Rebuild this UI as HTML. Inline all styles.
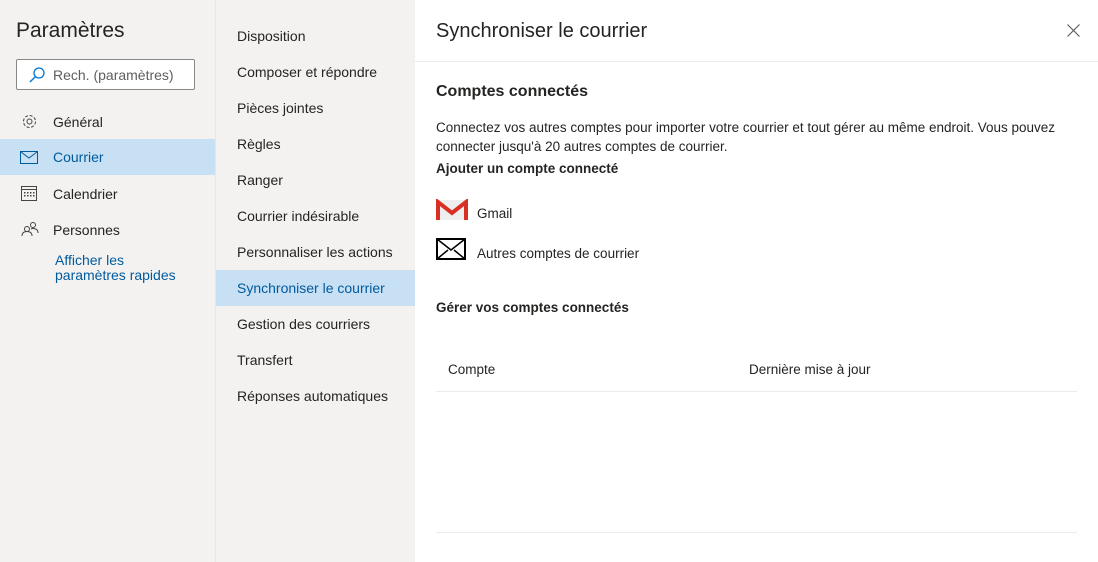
<!DOCTYPE html>
<html><head><meta charset="utf-8"><style>
*{margin:0;padding:0;box-sizing:border-box}
body{width:1098px;height:562px;overflow:hidden;font-family:"Liberation Sans",sans-serif;color:#252423;background:#fff;position:relative;font-size:14px}
.c1{position:absolute;left:0;top:0;width:215px;height:562px;background:#f3f2f1}
.c2{position:absolute;left:215px;top:0;width:200px;height:562px;background:#f3f2f1;border-left:1px solid #e8e6e4}
.c3{position:absolute;left:415px;top:0;width:683px;height:562px;background:#fff}
.t{position:absolute;white-space:nowrap}
h1{position:absolute;left:16px;top:19px;font-size:21px;font-weight:normal;color:#252423}
.search{position:absolute;left:16px;top:59px;width:179px;height:31px;border:1px solid #8a8886;background:#fff;border-radius:2px}
.nav{position:absolute;left:0;width:215px;height:36px;line-height:36px;padding-left:53px}
.sel{background:#c7e0f4;color:#005a9e;font-weight:normal}
.m{position:absolute;left:0;width:199px;height:36px;line-height:36px;padding-left:21px;font-size:14px}
</style></head><body>
<div class="c1">
<h1>Paramètres</h1>
<div class="search"><svg style="position:absolute;left:11px;top:6px" width="18" height="18" viewBox="0 0 18 18"><circle cx="11" cy="7" r="5" fill="none" stroke="#0078d4" stroke-width="1.3"/><line x1="7.4" y1="10.6" x2="2" y2="16" stroke="#0078d4" stroke-width="1.4"/></svg><span class="t" style="left:36px;top:7px;color:#605e5c">Rech. (paramètres)</span></div>
<div class="nav" style="top:104px">Général</div>
<svg style="position:absolute;left:21px;top:113px" width="17" height="17" viewBox="0 0 17 17"><circle cx="8.5" cy="8.5" r="2.5" fill="none" stroke="#444" stroke-width="1"/><circle cx="8.5" cy="8.5" r="6" fill="none" stroke="#444" stroke-width="1" stroke-dasharray="3 1.7"/></svg>
<div class="nav sel" style="top:139px">Courrier</div>
<svg style="position:absolute;left:20px;top:151px" width="18" height="13" viewBox="0 0 18 13"><rect x="0.5" y="0.5" width="17" height="12" fill="none" stroke="#005a9e"/><path d="M1 1l8 6 8-6" fill="none" stroke="#005a9e"/></svg>
<div class="nav" style="top:176px">Calendrier</div>
<svg style="position:absolute;left:21px;top:185px" width="16" height="16" viewBox="0 0 16 16"><rect x="0.5" y="1.5" width="15" height="14" fill="none" stroke="#444"/><line x1="0.5" y1="4.5" x2="15.5" y2="4.5" stroke="#444"/><g fill="#444"><rect x="3" y="7" width="1.5" height="1.5"/><rect x="6" y="7" width="1.5" height="1.5"/><rect x="9" y="7" width="1.5" height="1.5"/><rect x="12" y="7" width="1.5" height="1.5"/><rect x="3" y="10" width="1.5" height="1.5"/><rect x="6" y="10" width="1.5" height="1.5"/><rect x="9" y="10" width="1.5" height="1.5"/><rect x="12" y="10" width="1.5" height="1.5"/></g></svg>
<div class="nav" style="top:212px">Personnes</div>
<svg style="position:absolute;left:21px;top:221px" width="18" height="16" viewBox="0 0 18 16"><circle cx="6" cy="8" r="2.5" fill="none" stroke="#444"/><path d="M1 15c0-3 2-4.5 5-4.5s5 1.5 5 4.5" fill="none" stroke="#444"/><circle cx="12" cy="4" r="2.5" fill="none" stroke="#444"/><path d="M10 8c1-.5 1.5-.5 2-.5 3 0 5 1.5 5 4.5" fill="none" stroke="#444"/></svg>
<div class="t" style="left:55px;top:253px;color:#005a9e;line-height:15px">Afficher les<br>paramètres rapides</div>
</div>
<div class="c2">
<div class="m" style="top:18px">Disposition</div>
<div class="m" style="top:54px">Composer et répondre</div>
<div class="m" style="top:90px">Pièces jointes</div>
<div class="m" style="top:126px">Règles</div>
<div class="m" style="top:162px">Ranger</div>
<div class="m" style="top:198px">Courrier indésirable</div>
<div class="m" style="top:234px">Personnaliser les actions</div>
<div class="m sel" style="top:270px">Synchroniser le courrier</div>
<div class="m" style="top:306px">Gestion des courriers</div>
<div class="m" style="top:342px">Transfert</div>
<div class="m" style="top:378px">Réponses automatiques</div>
</div>
<div class="c3">
<div class="t" style="left:21px;top:20px;font-size:20px">Synchroniser le courrier</div>
<svg style="position:absolute;left:652px;top:24px" width="13" height="13" viewBox="0 0 13 13"><path d="M0.5 0.5l12 12M12.5 0.5l-12 12" stroke="#605e5c" stroke-width="1.2"/></svg>
<div style="position:absolute;left:0;top:61px;width:683px;height:1px;background:#edebe9"></div>
<div class="t" style="left:21px;top:83px;font-size:16px;font-weight:bold">Comptes connectés</div>
<div class="t" style="left:21px;top:118px;line-height:19px;font-size:13.5px">Connectez vos autres comptes pour importer votre courrier et tout gérer au même endroit. Vous pouvez<br>connecter jusqu'à 20 autres comptes de courrier.</div>
<div class="t" style="left:21px;top:161px;font-size:13.5px;font-weight:bold">Ajouter un compte connecté</div>
<svg style="position:absolute;left:21px;top:199px" width="32" height="22" viewBox="0 0 32 22"><rect x="2" y="1" width="28" height="20" fill="#eee"/><path d="M2 21V3l14 11 14-11v18" fill="none" stroke="#d93025" stroke-width="4"/></svg>
<div class="t" style="left:62px;top:206px;font-size:13.5px">Gmail</div>
<svg style="position:absolute;left:21px;top:238px" width="30" height="22" viewBox="0 0 30 22"><rect x="1" y="1" width="28" height="20" fill="#fff" stroke="#000" stroke-width="2"/><path d="M1 1l14 11 14-11M1 21l11-9M29 21l-11-9" fill="none" stroke="#000" stroke-width="1.5"/></svg>
<div class="t" style="left:62px;top:246px;font-size:13.5px">Autres comptes de courrier</div>
<div class="t" style="left:21px;top:300px;font-size:13.5px;font-weight:bold">Gérer vos comptes connectés</div>
<div class="t" style="left:33px;top:362px;font-size:13.5px">Compte</div>
<div class="t" style="left:334px;top:362px;font-size:13.5px">Dernière mise à jour</div>
<div style="position:absolute;left:21px;top:391px;width:641px;height:1px;background:#edebe9"></div>
<div style="position:absolute;left:21px;top:532px;width:641px;height:1px;background:#edebe9"></div>
</div>
</body></html>
